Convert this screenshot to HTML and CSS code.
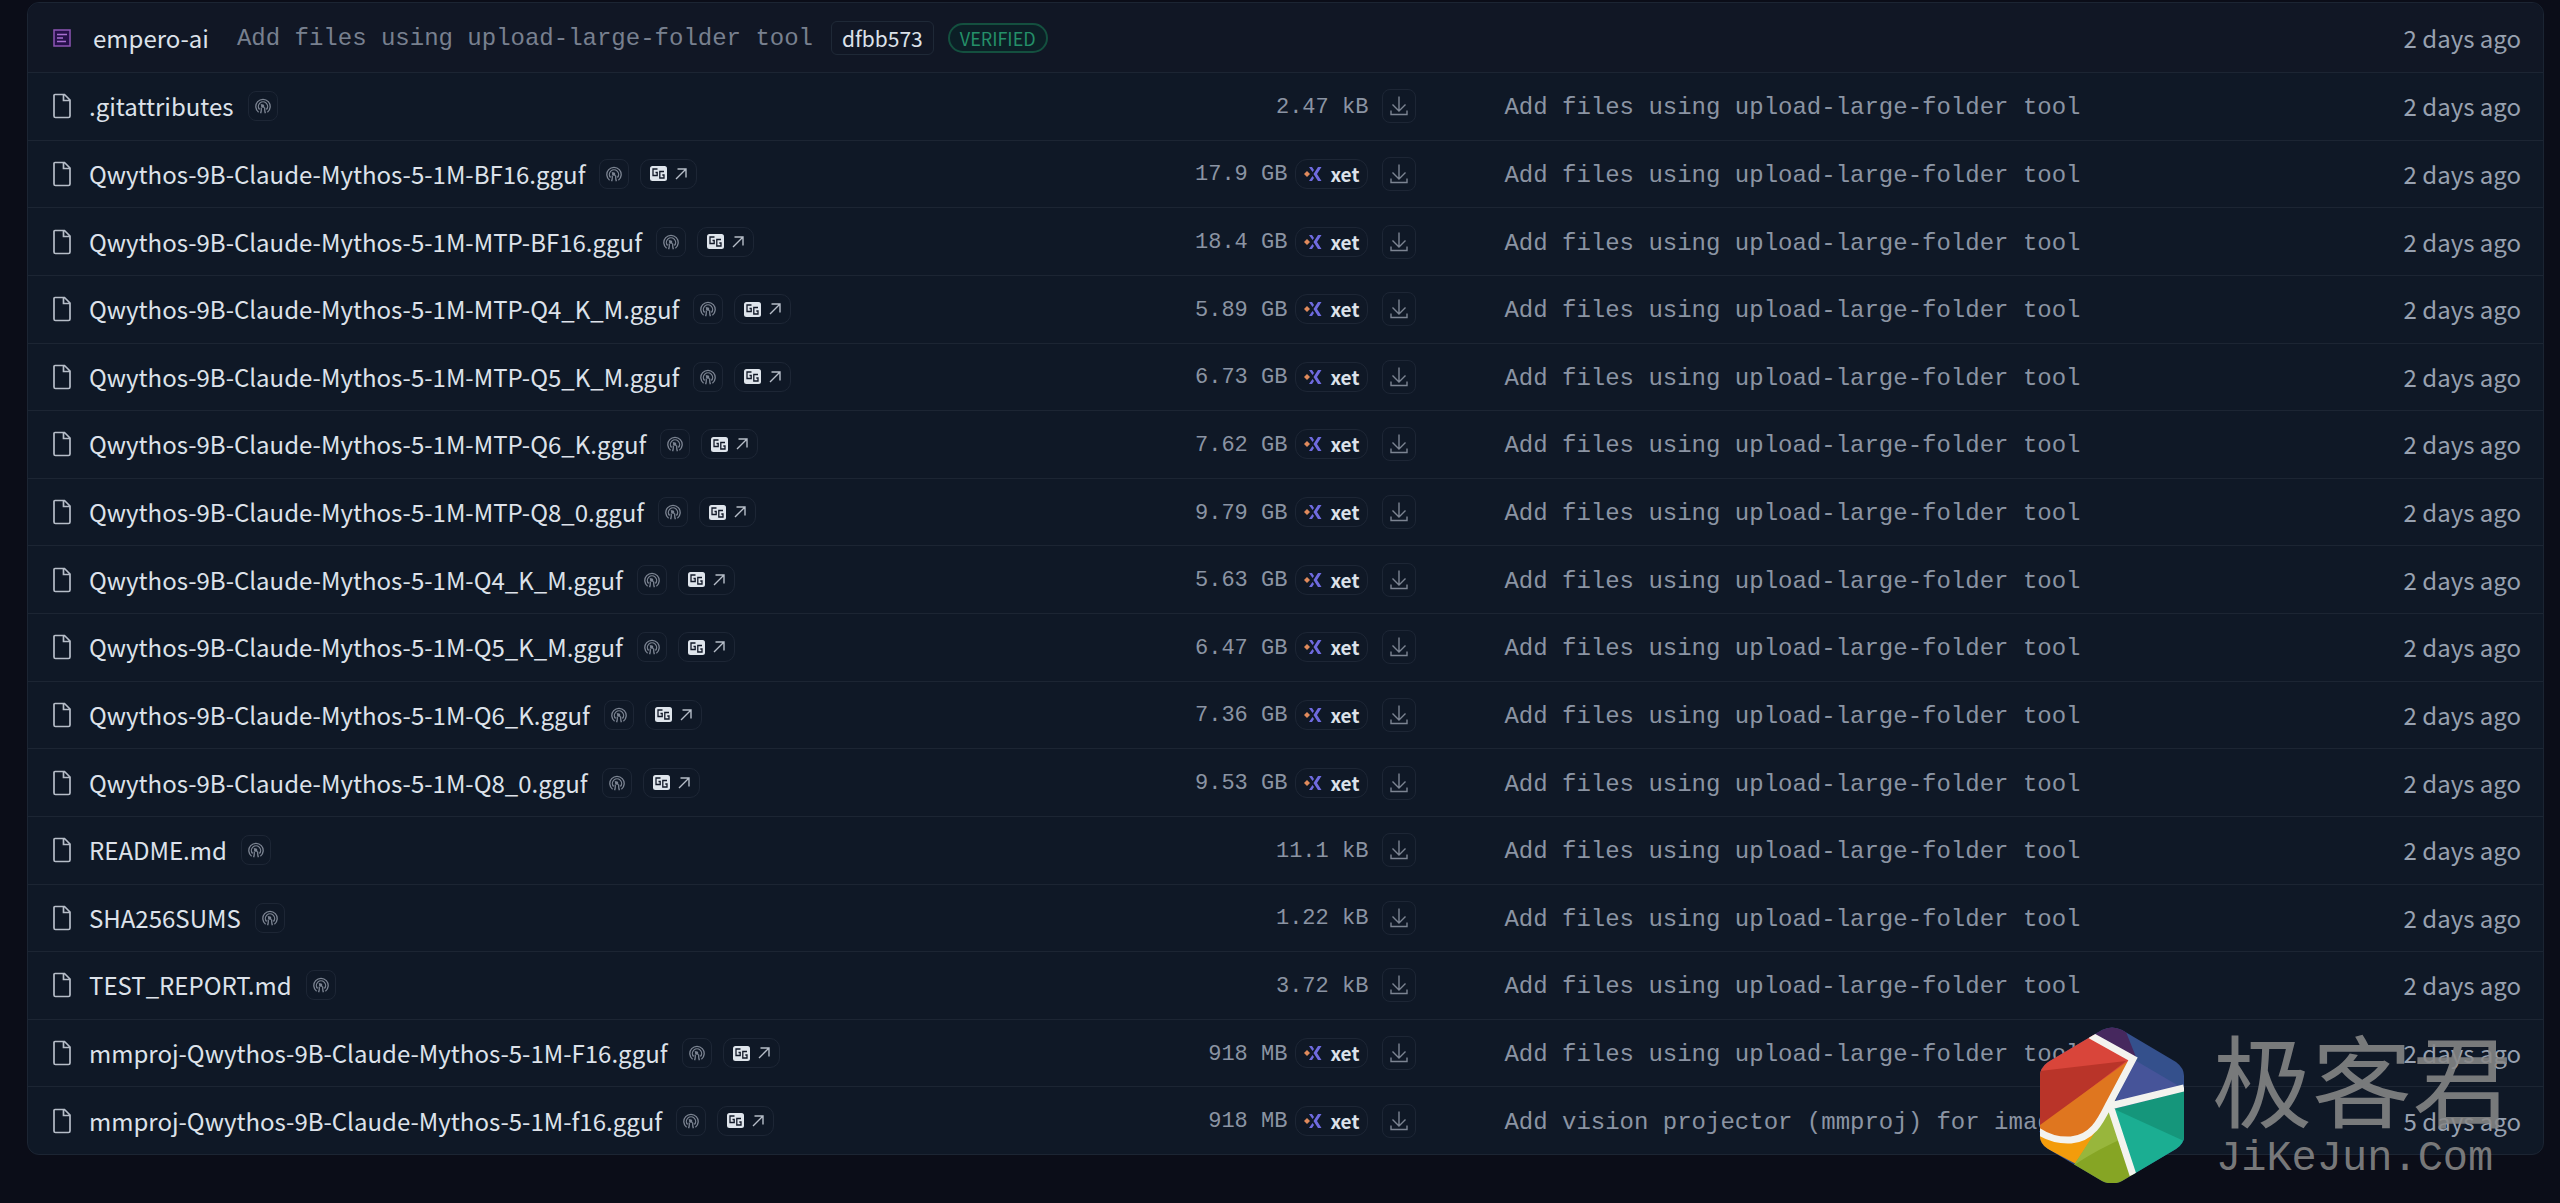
FILE: index.html
```html
<!DOCTYPE html>
<html lang="en">
<head>
    <meta charset="UTF-8">
    <title>Files</title>
    <link rel="stylesheet" href="styles.css">
</head>
<body>
<svg class="symbols" aria-hidden="true">
    <symbol id="icon_file" viewBox="0 0 18 26">
        <path d="M2 1.5h9.500l5.500 5.500V23a1.500 1.500 0 0 1-1.500 1.500h-13A1.500 1.500 0 0 1 1 23V2.500a1 1 0 0 1 1-1zM10.500 1.500v6H17" fill="none" stroke="currentColor" stroke-width="1.700"/>
    </symbol>
    <symbol id="icon_scan" viewBox="0 0 16 16">
        <path d="M3.600 14.200A7.200 7.200 0 1 1 12.400 14.200M4.600 11.500A4.600 4.600 0 1 1 11.400 11.500M5.600 15.200q1-2.500.6-5.500M10.400 15.200q-1-2.500-.6-5.500M6 6.400l3.500 3.500" fill="none" stroke="currentColor" stroke-width="1.300"/>
        <circle cx="7.600" cy="8" r="1.700" fill="currentColor"/>
    </symbol>
    <symbol id="icon_gguf" viewBox="0 0 17 15">
        <rect width="17" height="15" rx="2.500" fill="#dfe5ec"/>
        <path d="M7.500 3H3v6.500h4.200V6.500H5.500M14 5.500H9.800V12H14V9H12.300" fill="none" stroke="#111827" stroke-width="1.300"/>
    </symbol>
    <symbol id="icon_arrow" viewBox="0 0 12 12">
        <path d="M1 11L11 1M2.500 1H11v8.500" fill="none" stroke="currentColor" stroke-width="1.400"/>
    </symbol>
    <symbol id="icon_xet" viewBox="0 0 18 14">
        <path d="M3 4l3 3-3 3-3-3z" fill="#e08a5c"/>
        <path d="M5 0h3l2 3-1.500 2zM5 14h3l2-3-1.500-2zM14 0h3.500l-4.500 7 4.500 7H14l-4.500-7z" fill="#6f6be0"/>
    </symbol>
    <symbol id="icon_download" viewBox="0 0 18 20">
        <path d="M9 0.500v14M2.500 8.500L9 15l6.500-6.500M1 14.500v4h16v-4" fill="none" stroke="currentColor" stroke-width="1.400"/>
    </symbol>
</svg>
<main>
    <table class="files">
        <colgroup>
            <col class="col_name">
            <col class="col_size">
            <col class="col_msg">
            <col class="col_time">
        </colgroup>
        <thead>
        <tr>
            <th colspan="3">
                <div class="commit">
                    <svg class="avatar" viewBox="0 0 18 18" aria-hidden="true">
                        <rect x="1" y="1" width="16" height="16" fill="#26104a" stroke="#8d55b5" stroke-width="1.500"/>
                        <path d="M4 5.500h10M4 9h6M4 12.500h9" stroke="#a86fd0" stroke-width="1.300"/>
                    </svg>
                    <a class="author" href="#">empero-ai</a>
                    <a class="msg" href="#">Add files using upload-large-folder tool</a>
                    <a class="hash" href="#">dfbb573</a>
                    <span class="verified">VERIFIED</span>
                </div>
            </th>
            <th class="time">2 days ago</th>
        </tr>
        </thead>
        <tbody id="file_list"></tbody>
    </table>
</main>
<div class="watermark">
    <svg class="wm_logo" viewBox="0 0 144 156" aria-hidden="true">
        <clipPath id="hex"><path d="M62 3q10-5 20 0l54 32q8 6 8 14v60q0 8-8 13l-54 32q-10 5-20 0L8 122q-8-5-8-13V49q0-8 8-14z"/></clipPath>
        <g clip-path="url(#hex)">
            <path d="M0 0h144v156H0z" fill="#34508c"/>
            <path d="M50 0h34l12 30-6 6-40-26z" fill="#46285e"/>
            <path d="M93 32l51 30v6L74 80z" fill="#465499"/>
            <path d="M0 40L52 6l38 28L0 106z" fill="#d9453a"/>
            <path d="M0 44l86-10L0 100z" fill="#b93429"/>
            <path d="M88 34L0 98v14q50 16 74-36z" fill="#df761f"/>
            <path d="M0 104q50 22 70-22l-32 56-38-20z" fill="#f39c0b"/>
            <path d="M70 80l30 76H54L34 138q18-26 36-58z" fill="#86a524"/>
            <path d="M70 82L34 138q24-16 52-28z" fill="#98b63c"/>
            <path d="M74 82l70-16v90H96z" fill="#1bae92"/>
            <path d="M74 82l70-18v50z" fill="#15967b"/>
            <path d="M50 8l43 24-24 45c-8 16-16 34-38 36q-18 1-33-9M70 79l74-18M70 78l23 70" fill="none" stroke="#f3f3ee" stroke-width="7"/>
        </g>
    </svg>
    <div class="wm_text">
        <span class="wm_name" lang="zh">极客君</span>
        <span class="wm_site">JiKeJun.Com</span>
    </div>
</div>
<script src="files.js"></script>
</body>
</html>
```
FILE: styles.css
```css
* {
    box-sizing: border-box;
}

body {
    margin: 0;
    min-height: 100vh;
    position: relative;
    background-color: #0b0d18;
    color: #dde2ea;
    font-family: "Noto Sans CJK SC", "Noto Sans", sans-serif;
    font-size: 24px;
    line-height: 32px;
}

a {
    color: inherit;
    text-decoration: none;
}

svg {
    display: block;
    flex: none;
}

.symbols {
    display: none;
}

main {
    padding: 2px 16px 0 27px;
}

.files {
    width: 100%;
    height: calc(100vh - 50px);
    table-layout: fixed;
    border-collapse: separate;
    border-spacing: 0;
    border: 1px solid #1c2533;
    border-radius: 12px;
    background-color: #0f1826;
    overflow: hidden;
}

.col_name {
    width: 40%;
}

.col_size {
    width: 16%;
}

.col_msg {
    width: 32%;
}

th, td {
    padding: 0 22px 0 25px;
    text-align: left;
    font-weight: normal;
    white-space: nowrap;
}

td {
    border-top: 1px solid #1c2533;
}

thead th {
    padding-top: 17px;
    padding-bottom: 17px;
    background-color: #111725;
}

.commit, .file, .size {
    display: flex;
    align-items: center;
}

.msg, .size {
    color: #8b94a3;
    font-family: "Liberation Mono", monospace;
}

.msg {
    font-size: 24px;
}

.avatar {
    width: 18px;
    height: 18px;
    margin-right: 22px;
}

.commit .msg {
    margin: 0 18px 0 28px;
    color: #78808f;
}

.hash {
    padding: 0 10px;
    border: 1px solid #1f2937;
    border-radius: 6px;
    font-size: 21px;
}

.verified {
    margin-left: 14px;
    padding: 0 10px;
    border: 2px solid #14503f;
    border-radius: 16px;
    background-color: #0c1f26;
    color: #249069;
    font-size: 18px;
    line-height: 26px;
}

.file_icon {
    width: 18px;
    height: 26px;
    margin-right: 18px;
    color: #b6bdc8;
}

.badge {
    display: flex;
    align-items: center;
    height: 30px;
    border: 1px solid #1d2635;
    border-radius: 8px;
    color: #7c8492;
}

.scan {
    margin-left: 14px;
    padding: 0 6px;
}

.scan svg {
    width: 16px;
    height: 16px;
}

.gguf {
    margin-left: 11px;
    padding: 0 9px;
    gap: 8px;
    border-radius: 10px;
    background-color: transparent;
    color: #b6bdc8;
}

.gguf .gg {
    width: 17px;
    height: 15px;
}

.gguf .arrow {
    width: 12px;
    height: 12px;
}

.size_cell {
    padding: 0 20px 0 0;
}

.size {
    justify-content: flex-end;
    font-size: 22px;
}

.size span, .commit .msg {
    padding-top: 3px;
}

.xet {
    margin-left: 8px;
    padding: 0 8px;
    gap: 8px;
    border-radius: 12px;
    color: #dde2ea;
    font-family: "Noto Sans CJK SC", sans-serif;
    font-size: 19px;
    font-weight: bold;
}

.xet svg {
    width: 18px;
    height: 14px;
}

.download {
    width: 34px;
    height: 34px;
    margin-left: 14px;
    padding: 0 7px;
}

.download svg {
    width: 18px;
    height: 20px;
}

.msg_cell {
    padding-left: 68px;
    overflow: hidden;
}

.time {
    color: #98a1b0;
    text-align: right;
}

.watermark {
    position: absolute;
    right: 48px;
    bottom: 20px;
    display: flex;
    align-items: center;
    gap: 28px;
    pointer-events: none;
}

.wm_logo {
    width: 144px;
    height: 156px;
}

.wm_text {
    display: flex;
    flex-direction: column;
    color: rgba(135, 135, 135, 0.88);
}

.wm_name {
    font-size: 100px;
    line-height: 100px;
}

.wm_site {
    padding: 8px 0 0 4px;
    font-family: "Liberation Mono", monospace;
    font-size: 42px;
    line-height: 48px;
}
```
FILE: files.js
```js
var message = "Add files using upload-large-folder tool";
/* name, size, message, time */
var files = [
    [".gitattributes", "2.47 kB"],
    ["Qwythos-9B-Claude-Mythos-5-1M-BF16.gguf", "17.9 GB"],
    ["Qwythos-9B-Claude-Mythos-5-1M-MTP-BF16.gguf", "18.4 GB"],
    ["Qwythos-9B-Claude-Mythos-5-1M-MTP-Q4_K_M.gguf", "5.89 GB"],
    ["Qwythos-9B-Claude-Mythos-5-1M-MTP-Q5_K_M.gguf", "6.73 GB"],
    ["Qwythos-9B-Claude-Mythos-5-1M-MTP-Q6_K.gguf", "7.62 GB"],
    ["Qwythos-9B-Claude-Mythos-5-1M-MTP-Q8_0.gguf", "9.79 GB"],
    ["Qwythos-9B-Claude-Mythos-5-1M-Q4_K_M.gguf", "5.63 GB"],
    ["Qwythos-9B-Claude-Mythos-5-1M-Q5_K_M.gguf", "6.47 GB"],
    ["Qwythos-9B-Claude-Mythos-5-1M-Q6_K.gguf", "7.36 GB"],
    ["Qwythos-9B-Claude-Mythos-5-1M-Q8_0.gguf", "9.53 GB"],
    ["README.md", "11.1 kB"],
    ["SHA256SUMS", "1.22 kB"],
    ["TEST_REPORT.md", "3.72 kB"],
    ["mmproj-Qwythos-9B-Claude-Mythos-5-1M-F16.gguf", "918 MB"],
    ["mmproj-Qwythos-9B-Claude-Mythos-5-1M-f16.gguf", "918 MB", "Add vision projector (mmproj) for image input", "5 days ago"]
];

function icon(name, cls) {
    return '<svg class="' + (cls || '') + '" aria-hidden="true"><use href="#icon_' + name + '"/></svg>';
}

var html = "";
for (var i = 0; i < files.length; i++) {
    var f = files[i];
    var is_gguf = f[0].indexOf(".gguf") > 0;
    html += '<tr><td><div class="file">' + icon("file", "file_icon") +
        '<a href="#">' + f[0] + '</a>' +
        '<a class="badge scan" href="#" aria-label="Scan result">' + icon("scan") + '</a>' +
        (is_gguf ? '<button class="badge gguf" type="button" aria-label="View GGUF">' + icon("gguf", "gg") + icon("arrow", "arrow") + '</button>' : '') +
        '</div></td>' +
        '<td class="size_cell"><div class="size"><span>' + f[1] + '</span>' +
        (is_gguf ? '<a class="badge xet" href="#">' + icon("xet") + 'xet</a>' : '') +
        '<a class="badge download" href="#" aria-label="Download">' + icon("download") + '</a></div></td>' +
        '<td class="msg_cell"><a class="msg" href="#">' + (f[2] || message) + '</a></td>' +
        '<td class="time">' + (f[3] || "2 days ago") + '</td></tr>';
}
document.getElementById("file_list").innerHTML = html;
```
